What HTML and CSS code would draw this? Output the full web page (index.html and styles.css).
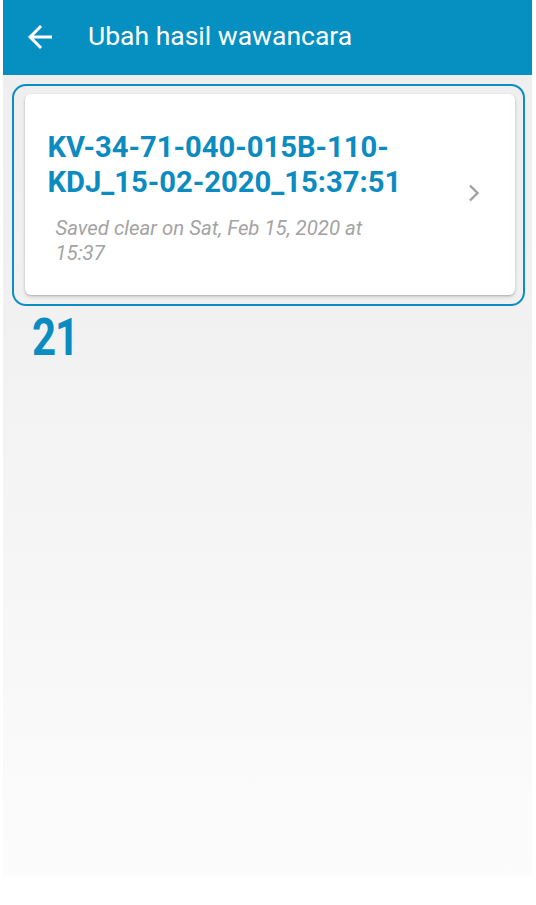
FILE: index.html
```html
<!DOCTYPE html>
<html lang="id">
<head>
<meta charset="utf-8">
<title>Ubah hasil wawancara</title>
<link rel="stylesheet" href="styles.css">
</head>
<body>
<div class="screen">
  <header class="appbar">
    <svg class="back" viewBox="0 0 24 24" aria-hidden="true"><path d="M20 11H7.83l5.59-5.59L12 4l-8 8 8 8 1.41-1.41L7.83 13H20v-2z"/></svg>
    <h1 class="appbar-title">Ubah hasil wawancara</h1>
  </header>
  <main class="content">
    <div class="highlight">
      <div class="card">
        <div class="card-text">
          <div class="card-title">KV-34-71-040-015B-110-KDJ_15-02-2020_15:37:51</div>
          <div class="card-sub">Saved clear on Sat, Feb 15, 2020 at 15:37</div>
        </div>
        <svg class="chevron" viewBox="0 0 14 20" aria-hidden="true"><path d="M3 2.5l7.5 7.5-7.5 7.5"/></svg>
      </div>
    </div>
    <div class="step"><span class="step-num">21</span></div>
  </main>
</div>
</body>
</html>
```
FILE: styles.css
```css
html, body {
  margin: 0;
  padding: 0;
  background: #ffffff;
}
body {
  font-family: Roboto, "Noto Sans", "Liberation Sans", sans-serif;
}
.screen {
  margin-left: 3px;
  width: 529px;
  height: 877px;
  background: linear-gradient(to bottom, #eeeeee 0%, #f0f0f0 30%, #fcfcfc 100%);
  display: flex;
  flex-direction: column;
}
.appbar {
  height: 75px;
  background: #0690c2;
  display: flex;
  align-items: center;
  flex-shrink: 0;
}
.back {
  width: 36px;
  height: 36px;
  fill: #ffffff;
  margin-left: 19px;
  margin-top: -1px;
}
.appbar-title {
  margin: 0 0 4px 30px;
  color: #ffffff;
  font-weight: 400;
  font-size: 26.5px;
  line-height: 30px;
}
.content {
  padding: 9px 7px 0 9px;
}
.highlight {
  border: 2.5px solid #0b8ec3;
  border-radius: 14px;
  padding: 7.5px 8.5px 9.5px 10.5px;
}
.card {
  background: #ffffff;
  border-radius: 6px;
  box-shadow: 0 1px 2px rgba(0, 0, 0, 0.18), 0 2px 4px rgba(0, 0, 0, 0.12);
  height: 201px;
  box-sizing: border-box;
  padding: 36px 0 0 23px;
  display: flex;
  align-items: flex-start;
}
.card-text {
  width: 360px;
}
.card-title {
  color: #0b8bc0;
  font-weight: 700;
  font-size: 29.2px;
  line-height: 35px;
}
.card-sub {
  margin: 16px 0 0 8px;
  color: #a3a3a3;
  font-style: italic;
  font-size: 20.4px;
  line-height: 25px;
}
.chevron {
  width: 14px;
  height: 20px;
  margin: 53px 0 0 auto;
  margin-right: 34px;
  fill: none;
  stroke: #a0a0a0;
  stroke-width: 2.4;
}
.step {
  padding: 3px 0 0 20px;
}
.step-num {
  display: inline-block;
  color: #0a8cc0;
  font-weight: 700;
  font-size: 42px;
  line-height: 46px;
  letter-spacing: -1px;
  transform: scaleY(1.25);
  transform-origin: top left;
}
```
